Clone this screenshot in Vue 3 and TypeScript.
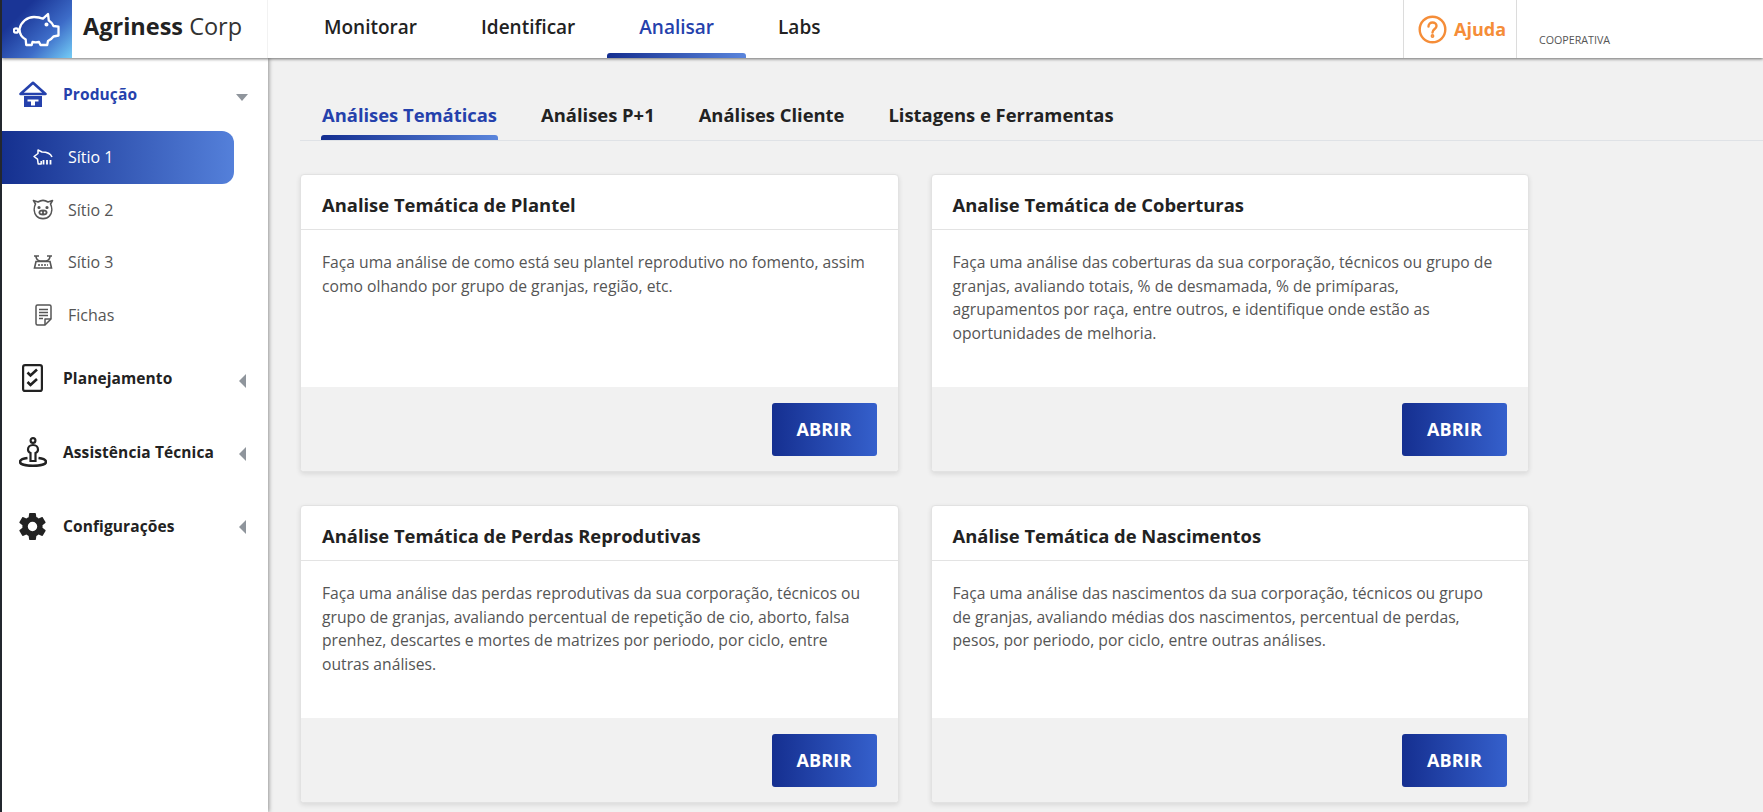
<script setup lang="ts">
type NavChild = { label: string; icon: string; active?: boolean };
type Card = { title: string; text: string };

const topLinks = ["Monitorar", "Identificar", "Analisar", "Labs"];
const tabs = ["Análises Temáticas", "Análises P+1", "Análises Cliente", "Listagens e Ferramentas"];

const children: NavChild[] = [
  { label: "Sítio 1", icon: "pig", active: true },
  { label: "Sítio 2", icon: "face" },
  { label: "Sítio 3", icon: "scale" },
  { label: "Fichas", icon: "doc" },
];

const cards: Card[] = [
  {
    title: "Analise Temática de Plantel",
    text: "Faça uma análise de como está seu plantel reprodutivo no fomento, assim como olhando por grupo de granjas, região, etc.",
  },
  {
    title: "Analise Temática de Coberturas",
    text: "Faça uma análise das coberturas da sua corporação, técnicos ou grupo de granjas, avaliando totais, % de desmamada, % de primíparas, agrupamentos por raça, entre outros, e identifique onde estão as oportunidades de melhoria.",
  },
  {
    title: "Análise Temática de Perdas Reprodutivas",
    text: "Faça uma análise das perdas reprodutivas da sua corporação, técnicos ou grupo de granjas, avaliando percentual de repetição de cio, aborto, falsa prenhez, descartes e mortes de matrizes por periodo, por ciclo, entre outras análises.",
  },
  {
    title: "Análise Temática de Nascimentos",
    text: "Faça uma análise das nascimentos da sua corporação, técnicos ou grupo de granjas, avaliando médias dos nascimentos, percentual de perdas, pesos, por periodo, por ciclo, entre outras análises.",
  },
];
</script>

<template>
  <div class="shell">
    <header class="topbar">
      <div class="logo">
        <svg width="48" height="35" viewBox="10 8 48 35" fill="none" stroke="#fff" stroke-width="2.300" stroke-linejoin="round" stroke-linecap="round">
          <path d="M16.500 25C18 18 24 13 31 13c3.500 0 6.500.5 9 1.700l5-4.700.8 6.500c2 1.300 3.700 3 4.700 5.500l5 .7v8.800l-5 1c-1.500 2-3.500 3.500-5.500 4.500l-.8 4H37.500l-1.500-3c-2 .4-4.500.4-6.500 0l-.8 3h-5.500l-.5-5.500C19 33.500 16.500 29.500 16.500 25z" />
          <circle cx="13" cy="26.500" r="2.200" />
          <circle cx="43.500" cy="20.500" r=".9" fill="#fff" />
        </svg>
      </div>
      <div class="brand"><b>Agriness</b> Corp</div>
      <nav class="toplinks">
        <a v-for="l in topLinks" :key="l" class="toplink" :class="{ on: l === 'Analisar' }">{{ l }}</a>
      </nav>
      <div class="help">
        <svg width="29" height="29" viewBox="0 0 29 29" fill="none" stroke="#f58d38" stroke-width="2.400">
          <circle cx="14.500" cy="14.500" r="12.800" />
          <path d="M10.500 11.500c0-2.500 1.800-4 4-4s4 1.500 4 3.500c0 3-4 3-4 6.500" stroke-linecap="round" />
          <circle cx="14.500" cy="21" r=".7" fill="#f58d38" />
        </svg>
        <span>Ajuda</span>
      </div>
      <div class="org"><span>COOPERATIVA</span></div>
    </header>

    <div class="below">
      <aside class="side">
        <div class="group first">
          <span class="gicon">
            <svg width="28" height="28" viewBox="18 80 28 28">
              <path d="M19.500 94 32 82.800 44.500 94z" fill="none" stroke="#2541ac" stroke-width="2.600" stroke-linejoin="round" />
              <path d="M23 96h18v11H23zM26.500 99.500v2H30v4h4v-4h3.500v-2z" fill="#2541ac" fill-rule="evenodd" />
            </svg>
          </span>
          <span class="glabel blue">Produção</span>
          <i class="caret down"></i>
        </div>
        <a v-for="c in children" :key="c.label" class="child" :class="{ active: c.active }">
          <span class="cicon">
            <svg v-if="c.icon === 'pig'" width="22" height="18" viewBox="32 149 22 18" fill="none" stroke="currentColor" stroke-width="1.500" stroke-linejoin="round">
              <path d="M52 158c-1.500-3.500-5.500-5-10-5l-4-2v3.500L34 157.500l3.500 2.700.7 4.800h3v-3" />
              <path d="M43.500 161v4.500M47 161v4.500M50.500 161v4.500" stroke-width="1.800" />
            </svg>
            <svg v-else-if="c.icon === 'face'" width="22" height="22" viewBox="0 0 22 22" fill="none" stroke="currentColor" stroke-width="1.600" stroke-linejoin="round">
              <path d="M3.500 5 1.500 1.500l4.500 1.500a9 9 0 0 1 10 0l4.500-1.500L18.500 5c2 4 1.500 9-1 12-3 3.500-10 3.500-13 0-2.500-3-3-8-1-12z" />
              <ellipse cx="11" cy="13.500" rx="4.500" ry="3" fill="currentColor" stroke="none" />
              <circle cx="9.300" cy="13.500" r=".9" fill="#fff" stroke="none" />
              <circle cx="12.700" cy="13.500" r=".9" fill="#fff" stroke="none" />
              <circle cx="7" cy="8.500" r=".8" fill="currentColor" />
              <circle cx="15" cy="8.500" r=".8" fill="currentColor" />
            </svg>
            <svg v-else-if="c.icon === 'scale'" width="20" height="14" viewBox="0 0 20 14" fill="none" stroke="currentColor" stroke-width="1.600">
              <path d="M1 1h5M14 1h5M3 1c0 2.500 1.500 4.500 4 5h6c2.500-.5 4-2.500 4-5" />
              <path d="M3 6.500h14l1.500 6.500H1.500z" />
              <path d="M5 10h10" stroke-width="1.400" stroke-dasharray="2 1" />
            </svg>
            <svg v-else width="17" height="22" viewBox="0 0 17 22" fill="none" stroke="currentColor" stroke-width="1.500" stroke-linejoin="round">
              <path d="M2.500 1h12a1.500 1.500 0 0 1 1.500 1.500V15l-6 6H2.500A1.500 1.500 0 0 1 1 19.500v-17A1.500 1.500 0 0 1 2.500 1z" />
              <path d="M10 21v-6h6M4 5.500h9M4 8.500h9M4 11.500h9M4 14.500h4" />
            </svg>
          </span>
          <span>{{ c.label }}</span>
        </a>

        <div class="group g-plan">
          <span class="gicon">
            <svg class="plan" width="21" height="28" viewBox="0 0 21 28" fill="none" stroke="#222" stroke-width="2.200">
              <rect x="1.100" y="1.100" width="18.800" height="25.800" rx="2" />
              <path d="M5.500 8.500 8.500 11.500 15 5.500M5.500 18l3 3 6.500-6" stroke-width="2.600" />
            </svg>
          </span>
          <span class="glabel">Planejamento</span>
          <i class="caret left"></i>
        </div>
        <div class="group g-tech">
          <span class="gicon">
            <svg width="28" height="30" viewBox="0 0 28 30" fill="none" stroke="#222" stroke-width="2.200">
              <circle cx="14" cy="3.500" r="2.400" />
              <path d="M14 8c-3 0-5 2-5 4.500 0 2 1 3 2.500 3.500v8h5v-8c1.500-.5 2.500-1.500 2.500-3.500C19 10 17 8 14 8z" />
              <path d="M8.500 21C4 21.500 1 22.800 1 25c0 2.500 6 3.800 13 3.800S27 27.500 27 25c0-2.200-3-3.500-7.500-4" stroke-width="2.600" />
            </svg>
          </span>
          <span class="glabel">Assistência Técnica</span>
          <i class="caret left"></i>
        </div>
        <div class="group g-conf">
          <span class="gicon">
            <svg width="27" height="27" viewBox="2 2 20 20" fill="#222">
              <path d="M19.400 13c.04-.33.06-.66.06-1s-.02-.67-.06-1l2.100-1.650c.2-.15.25-.42.12-.64l-2-3.460c-.12-.22-.39-.3-.61-.22l-2.490 1c-.52-.4-1.080-.73-1.690-.98l-.38-2.650A.5.500 0 0 0 14 2h-4a.5.500 0 0 0-.49.420l-.38 2.650c-.61.25-1.170.59-1.690.98l-2.490-1c-.23-.09-.49 0-.61.22l-2 3.460c-.13.22-.07.49.12.64L4.570 11c-.04.33-.07.67-.07 1s.03.67.07 1l-2.110 1.650c-.19.150-.25.420-.12.640l2 3.460c.12.22.39.3.61.22l2.490-1c.52.4 1.080.73 1.690.98l.38 2.650c.03.24.240.420.49.420h4c.25 0 .46-.18.49-.42l.38-2.650c.61-.25 1.170-.59 1.690-.98l2.490 1c.23.09.49 0 .61-.22l2-3.460c.13-.22.07-.49-.12-.64zM12 15.500a3.500 3.500 0 1 1 0-7 3.500 3.500 0 0 1 0 7z" />
            </svg>
          </span>
          <span class="glabel">Configurações</span>
          <i class="caret left"></i>
        </div>
      </aside>

      <main class="content">
        <div class="tabs">
          <a v-for="(t, i) in tabs" :key="t" class="tab" :class="{ on: i === 0 }">{{ t }}</a>
        </div>
        <section class="grid">
          <article v-for="c in cards" :key="c.title" class="card">
            <h3>{{ c.title }}</h3>
            <p>{{ c.text }}</p>
            <footer><button type="button">ABRIR</button></footer>
          </article>
        </section>
      </main>
    </div>
  </div>
</template>

<style>
html,
body {
  margin: 0;
  height: 100%;
  overflow: hidden;
}
</style>

<style scoped>
.shell {
  width: 1763px;
  height: 812px;
  overflow: hidden;
  display: flex;
  flex-direction: column;
  font-family: "Open Sans", "Noto Sans", sans-serif;
  background: #f1f1f1;
  color: #222;
  border-left: 2px solid #23272e;
  box-sizing: border-box;
}
.topbar {
  height: 58px;
  flex: none;
  display: flex;
  align-items: stretch;
  background: #fff;
  box-shadow: 0 1px 3px rgba(0, 0, 0, 0.55);
  position: relative;
  z-index: 2;
}
.logo {
  width: 70px;
  display: flex;
  align-items: center;
  justify-content: center;
  background: linear-gradient(135deg, #1a3596 25%, #3d6cc8 65%, #74cdf6 100%);
}
.brand {
  width: 196px;
  box-sizing: border-box;
  padding-left: 11px;
  font-size: 23.500px;
  line-height: 53px;
  color: #333;
  border-right: 1px solid #f2f2f2;
}
.brand b {
  font-weight: 700;
  color: #222;
}
.toplinks {
  flex: 1;
  display: flex;
  padding-left: 24px;
}
.toplink {
  height: 58px;
  box-sizing: border-box;
  padding: 0 32px;
  line-height: 55px;
  font-size: 19px;
  font-weight: 600;
  position: relative;
}
.toplink.on {
  color: #2541ac;
}
.toplink.on::after,
.tab.on::after {
  content: "";
  position: absolute;
  left: 0;
  right: 0;
  bottom: 0;
  height: 5px;
  border-radius: 3px 3px 0 0;
  background: linear-gradient(90deg, #142e90, #5a85dc);
}
.help {
  width: 114px;
  box-sizing: border-box;
  border-left: 1.500px solid #dcdcdc;
  border-right: 1.500px solid #dcdcdc;
  display: flex;
  align-items: center;
  gap: 7px;
  padding-left: 14px;
  color: #f58d38;
  font-size: 18px;
  font-weight: 700;
}
.org {
  width: 246px;
  box-sizing: border-box;
  padding: 32px 0 0 22px;
  font-size: 10.700px;
  line-height: 16px;
  color: #555;
}
.below {
  flex: 1;
  display: flex;
  min-height: 0;
}
.side {
  width: 266px;
  flex: none;
  background: #fff;
  box-shadow: 1px 0 4px rgba(0, 0, 0, 0.4);
  position: relative;
  z-index: 1;
}
.group {
  display: flex;
  align-items: center;
  height: 28px;
  padding: 0 20px 0 17px;
}
.group.first {
  margin-top: 22px;
  margin-bottom: 23px;
}
.g-plan {
  margin-top: 23px;
}
.g-tech {
  margin-top: 46px;
}
.g-conf {
  margin-top: 46px;
}
.gicon {
  width: 44px;
  height: 28px;
  flex: none;
  display: flex;
  align-items: center;
}
.gicon .plan {
  margin-left: 3px;
}
.glabel {
  font-size: 15.500px;
  font-weight: 700;
  white-space: nowrap;
  letter-spacing: 0.1px;
}
.glabel.blue {
  color: #2541ac;
}
.caret {
  margin-left: auto;
  width: 0;
  height: 0;
}
.caret.down {
  transform: translateY(3px);
  border-left: 6.500px solid transparent;
  border-right: 6.500px solid transparent;
  border-top: 7px solid #8f959c;
}
.caret.left {
  margin-right: 2px;
  border-top: 7px solid transparent;
  border-bottom: 7px solid transparent;
  border-right: 7px solid #8f959c;
}
.g-plan .caret {
  transform: translateY(3px);
}
.g-tech .caret {
  transform: translateY(2px);
}
.g-conf .caret {
  transform: translateY(1px);
}
.child {
  height: 52.500px;
  width: 232px;
  display: flex;
  align-items: center;
  box-sizing: border-box;
  color: #555;
  font-size: 16px;
  padding-left: 29px;
}
.child.active {
  background: linear-gradient(90deg, #15308f, #5480da);
  color: #fff;
  border-radius: 0 12px 12px 0;
}
.cicon {
  width: 24px;
  margin-right: 13px;
  display: flex;
  justify-content: center;
  align-items: center;
}
.content {
  flex: 1;
  min-width: 0;
  padding: 0 0 0 32px;
}
.tabs {
  height: 83px;
  box-sizing: border-box;
  border-bottom: 1.500px solid #dfe2e6;
  display: flex;
  align-items: flex-end;
  padding-left: 21px;
}
.tab {
  position: relative;
  margin-right: 42px;
  padding: 0 1px;
  height: 44px;
  line-height: 38px;
  font-size: 18.400px;
  font-weight: 700;
  white-space: nowrap;
  color: #222;
}
.tab.on {
  color: #2541ac;
}
.grid {
  margin-top: 33px;
  display: grid;
  grid-template-columns: 598.500px 598.500px;
  column-gap: 32px;
  row-gap: 33px;
}
.card {
  height: 298px;
  background: #fff;
  border-radius: 4px;
  border: 1px solid #e2e2e2;
  box-sizing: border-box;
  box-shadow: 0 2px 5px rgba(0, 0, 0, 0.1);
  display: flex;
  flex-direction: column;
  overflow: hidden;
}
.card h3 {
  margin: 0;
  height: 55px;
  flex: none;
  box-sizing: border-box;
  padding: 3px 21px 0;
  line-height: 53px;
  font-size: 18.400px;
  font-weight: 700;
  color: #222;
  border-bottom: 1.500px solid #e3e3e3;
}
.card p {
  margin: 0;
  flex: 1;
  padding: 21px 28px 0 21px;
  font-size: 15.700px;
  line-height: 23.500px;
  color: #555;
}
.card footer {
  height: 84px;
  flex: none;
  background: #f1f1f1;
  display: flex;
  justify-content: flex-end;
  align-items: center;
  padding: 0 21px;
}
button {
  width: 105px;
  height: 53px;
  border: 0;
  border-radius: 3px;
  background: linear-gradient(90deg, #152f90, #3560cc);
  color: #fff;
  font-family: inherit;
  font-size: 18px;
  font-weight: 700;
  letter-spacing: 0.2px;
}
</style>
